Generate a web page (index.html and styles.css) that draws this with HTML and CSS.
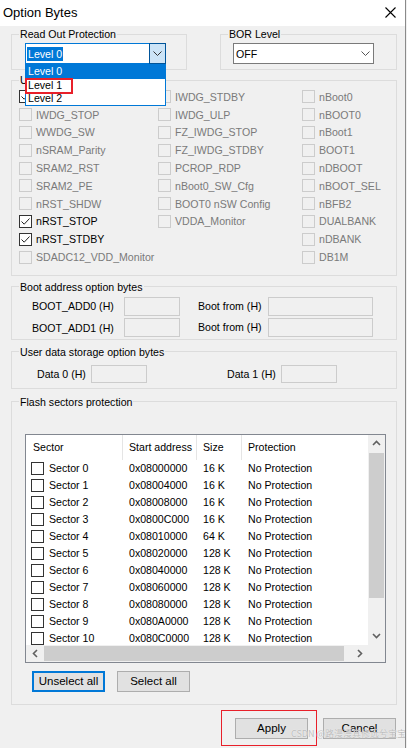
FILE: index.html
```html
<!DOCTYPE html>
<html lang="en">
<head>
    <meta charset="utf-8">
    <title>Option Bytes</title>
    <link rel="stylesheet" href="styles.css">
</head>
<body>
<div class="window">
    <div class="titlebar">
        <span class="title">Option Bytes</span>
        <svg class="close" width="11" height="11" viewBox="0 0 11 11"><path d="M0.5 0.5 L10.5 10.5 M10.5 0.5 L0.5 10.5" stroke="#000" stroke-width="1.1" fill="none"/></svg>
    </div>

    <div class="content">
        <div class="top-row">
            <fieldset class="group rop">
                <legend>Read Out Protection</legend>
                <div class="group-body">
                    <div class="combo focused">
                        <span class="combo-text"><span class="sel">Level 0</span></span>
                        <span class="combo-btn active">
                            <svg width="9" height="5" viewBox="0 0 9 5"><path d="M0.5 0.5 L4.5 4.5 L8.5 0.5" stroke="#333" fill="none"/></svg>
                        </span>
                    </div>
                </div>
            </fieldset>
            <fieldset class="group bor">
                <legend>BOR Level</legend>
                <div class="group-body">
                    <div class="combo">
                        <span class="combo-text">OFF</span>
                        <span class="combo-btn">
                            <svg width="9" height="5" viewBox="0 0 9 5"><path d="M0.5 0.5 L4.5 4.5 L8.5 0.5" stroke="#555" fill="none"/></svg>
                        </span>
                    </div>
                </div>
            </fieldset>
        </div>

        <fieldset class="group user-config">
            <legend>User Configuration</legend>
            <div class="cb-grid">
                <label class="cb-item"><span class="cb on"><svg width="11" height="11" viewBox="0 0 11 11"><path d="M1.5 5.5 L4.2 8.2 L9.5 2.5" stroke="#222" fill="none"/></svg></span>IWDG_SW</label>
                <label class="cb-item off"><span class="cb"></span>IWDG_STDBY</label>
                <label class="cb-item off"><span class="cb"></span>nBoot0</label>

                <label class="cb-item off"><span class="cb"></span>IWDG_STOP</label>
                <label class="cb-item off"><span class="cb"></span>IWDG_ULP</label>
                <label class="cb-item off"><span class="cb"></span>nBOOT0</label>

                <label class="cb-item off"><span class="cb"></span>WWDG_SW</label>
                <label class="cb-item off"><span class="cb"></span>FZ_IWDG_STOP</label>
                <label class="cb-item off"><span class="cb"></span>nBoot1</label>

                <label class="cb-item off"><span class="cb"></span>nSRAM_Parity</label>
                <label class="cb-item off"><span class="cb"></span>FZ_IWDG_STDBY</label>
                <label class="cb-item off"><span class="cb"></span>BOOT1</label>

                <label class="cb-item off"><span class="cb"></span>SRAM2_RST</label>
                <label class="cb-item off"><span class="cb"></span>PCROP_RDP</label>
                <label class="cb-item off"><span class="cb"></span>nDBOOT</label>

                <label class="cb-item off"><span class="cb"></span>SRAM2_PE</label>
                <label class="cb-item off"><span class="cb"></span>nBoot0_SW_Cfg</label>
                <label class="cb-item off"><span class="cb"></span>nBOOT_SEL</label>

                <label class="cb-item off"><span class="cb"></span>nRST_SHDW</label>
                <label class="cb-item off"><span class="cb"></span>BOOT0 nSW Config</label>
                <label class="cb-item off"><span class="cb"></span>nBFB2</label>

                <label class="cb-item"><span class="cb on"><svg width="11" height="11" viewBox="0 0 11 11"><path d="M1.5 5.5 L4.2 8.2 L9.5 2.5" stroke="#222" fill="none"/></svg></span>nRST_STOP</label>
                <label class="cb-item off"><span class="cb"></span>VDDA_Monitor</label>
                <label class="cb-item off"><span class="cb"></span>DUALBANK</label>

                <label class="cb-item"><span class="cb on"><svg width="11" height="11" viewBox="0 0 11 11"><path d="M1.5 5.5 L4.2 8.2 L9.5 2.5" stroke="#222" fill="none"/></svg></span>nRST_STDBY</label>
                <span></span>
                <label class="cb-item off"><span class="cb"></span>nDBANK</label>

                <label class="cb-item off"><span class="cb"></span>SDADC12_VDD_Monitor</label>
                <span></span>
                <label class="cb-item off"><span class="cb"></span>DB1M</label>
            </div>
        </fieldset>

        <fieldset class="group boot">
            <legend>Boot address option bytes</legend>
            <div class="boot-body">
                <div class="field-row">
                    <span class="boot-label">BOOT_ADD0 (H)</span>
                    <span class="field"></span>
                    <span class="from-label">Boot from (H)</span>
                    <span class="field wide"></span>
                </div>
                <div class="field-row">
                    <span class="boot-label low">BOOT_ADD1 (H)</span>
                    <span class="field"></span>
                    <span class="from-label">Boot from (H)</span>
                    <span class="field wide"></span>
                </div>
            </div>
        </fieldset>

        <fieldset class="group data">
            <legend>User data storage option bytes</legend>
            <div class="data-body">
                <span class="data-label">Data 0 (H)</span>
                <span class="field"></span>
                <span class="data-label second">Data 1 (H)</span>
                <span class="field"></span>
            </div>
        </fieldset>

        <fieldset class="group flash">
            <legend>Flash sectors protection</legend>
            <div class="flash-body">
                <div class="listview">
                    <div class="lv-main">
                        <div class="lv-head">
                            <span>Sector</span>
                            <span>Start address</span>
                            <span>Size</span>
                            <span>Protection</span>
                        </div>
                        <div class="lv-row"><span class="lv-first"><span class="cb on plain"></span>Sector 0</span><span>0x08000000</span><span>16 K</span><span>No Protection</span></div>
                        <div class="lv-row"><span class="lv-first"><span class="cb on plain"></span>Sector 1</span><span>0x08004000</span><span>16 K</span><span>No Protection</span></div>
                        <div class="lv-row"><span class="lv-first"><span class="cb on plain"></span>Sector 2</span><span>0x08008000</span><span>16 K</span><span>No Protection</span></div>
                        <div class="lv-row"><span class="lv-first"><span class="cb on plain"></span>Sector 3</span><span>0x0800C000</span><span>16 K</span><span>No Protection</span></div>
                        <div class="lv-row"><span class="lv-first"><span class="cb on plain"></span>Sector 4</span><span>0x08010000</span><span>64 K</span><span>No Protection</span></div>
                        <div class="lv-row"><span class="lv-first"><span class="cb on plain"></span>Sector 5</span><span>0x08020000</span><span>128 K</span><span>No Protection</span></div>
                        <div class="lv-row"><span class="lv-first"><span class="cb on plain"></span>Sector 6</span><span>0x08040000</span><span>128 K</span><span>No Protection</span></div>
                        <div class="lv-row"><span class="lv-first"><span class="cb on plain"></span>Sector 7</span><span>0x08060000</span><span>128 K</span><span>No Protection</span></div>
                        <div class="lv-row"><span class="lv-first"><span class="cb on plain"></span>Sector 8</span><span>0x08080000</span><span>128 K</span><span>No Protection</span></div>
                        <div class="lv-row"><span class="lv-first"><span class="cb on plain"></span>Sector 9</span><span>0x080A0000</span><span>128 K</span><span>No Protection</span></div>
                        <div class="lv-row"><span class="lv-first"><span class="cb on plain"></span>Sector 10</span><span>0x080C0000</span><span>128 K</span><span>No Protection</span></div>
                    </div>
                    <div class="vscroll">
                        <span class="arrow"><svg width="9" height="6" viewBox="0 0 9 6"><path d="M1 5 L4.5 1.5 L8 5" stroke="#606060" stroke-width="1.6" fill="none"/></svg></span>
                        <span class="vthumb"></span>
                        <span class="vtrack"></span>
                        <span class="arrow"><svg width="9" height="6" viewBox="0 0 9 6"><path d="M1 1 L4.5 4.5 L8 1" stroke="#606060" stroke-width="1.6" fill="none"/></svg></span>
                    </div>
                    <div class="hscroll">
                        <span class="arrow"><svg width="6" height="9" viewBox="0 0 6 9"><path d="M5 1 L1.5 4.5 L5 8" stroke="#606060" stroke-width="1.6" fill="none"/></svg></span>
                        <span class="hthumb"></span>
                        <span class="arrow"><svg width="6" height="9" viewBox="0 0 6 9"><path d="M1 1 L4.5 4.5 L1 8" stroke="#606060" stroke-width="1.6" fill="none"/></svg></span>
                    </div>
                    <div class="corner"></div>
                </div>
                <div class="btn-row">
                    <button class="btn default">Unselect all</button>
                    <button class="btn">Select all</button>
                </div>
            </div>
        </fieldset>

        <div class="dialog-buttons">
            <button class="btn">Apply</button>
            <button class="btn">Cancel</button>
        </div>
    </div>

    <!-- open combo list, drawn over the dialog -->
    <ul class="dropdown">
        <li class="hl">Level 0</li>
        <li>Level 1</li>
        <li>Level 2</li>
    </ul>

    <!-- red annotation boxes from the screenshot -->
    <div class="mark mark-level"></div>
    <div class="mark mark-apply"></div>
    <div class="watermark">CSDN @路漫漫其修远兮宝宝</div>
</div>
</body>
</html>
```

FILE: styles.css
```css
* {
    box-sizing: border-box;
}
body {
    margin: 0;
    font-family: "Liberation Sans", Arial, sans-serif;
    font-size: 10.6px;
    color: #000;
    background: #f0f0f0;
}
.window {
    position: relative;
    width: 406px;
    height: 748px;
    background: #f0f0f0;
    border-right: 1px solid #8a8a8a;
    overflow: hidden;
}
.titlebar {
    height: 26px;
    background: #fff;
    display: flex;
    align-items: center;
    justify-content: space-between;
    padding: 0 9px 1px 3px;
}
.title {
    font-size: 13px;
}
.content {
    padding: 1px 0 0 11px;
    width: 397px;
}

/* group boxes */
.group {
    margin: 0;
    padding: 0;
    border: 1px solid #dcdcdc;
    min-width: 0;
}
.group legend {
    margin-left: 7px;
    padding: 0 1px;
    line-height: 14px;
    height: 14px;
}
.top-row {
    display: flex;
    gap: 33px;
}
.rop {
    width: 176px;
}
.bor {
    width: 177px;
}
.group-body {
    padding: 2px 0 5px 13px;
}
.bor .group-body {
    padding-left: 12px;
}

/* combo boxes */
.combo {
    width: 141px;
    height: 21px;
    background: #fff;
    border: 1px solid #7a7a7a;
    display: flex;
    align-items: center;
    justify-content: space-between;
}
.combo.focused {
    border-color: #0078d7;
}
.combo-text {
    padding-left: 2px;
}
.combo-text .sel {
    background: #0078d7;
    color: #fff;
    padding: 1px 1px;
    margin-left: -1px;
}
.combo-btn {
    width: 17px;
    height: 21px;
    margin-right: -1px;
    display: flex;
    align-items: center;
    justify-content: center;
}
.combo-btn.active {
    background: #cce4f7;
    border: 1px solid #005499;
}

/* user configuration checkboxes */
.user-config {
    margin-top: 3px;
    width: 386px;
}
.cb-grid {
    display: grid;
    grid-template-columns: 139px 144px 1fr;
    grid-auto-rows: 17.8px;
    margin-top: 1px;
    padding: 0 0 9px 7px;
}
.cb-item {
    display: flex;
    align-items: center;
    white-space: nowrap;
}
.cb-item.off {
    color: #7a7a7a;
}
.cb {
    width: 13px;
    height: 13px;
    flex: none;
    margin-right: 4px;
    border: 1px solid #cccccc;
    background: #f0f0f0;
    display: flex;
    align-items: center;
    justify-content: center;
}
.cb.on {
    border-color: #333;
    background: #fff;
}

/* boot address */
.boot {
    margin-top: 4px;
    width: 386px;
}
.boot-body {
    margin-top: 3px;
    padding: 0 0 2px 20px;
    display: flex;
    flex-direction: column;
    gap: 2px;
}
.field-row {
    display: flex;
    align-items: center;
    height: 19px;
}
.boot-label {
    width: 92px;
}
.boot-label.low {
    padding-top: 2px;
}
.from-label {
    width: 70px;
    margin-left: 18px;
}
.field {
    width: 56px;
    height: 19px;
    border: 1px solid #cccccc;
    background: #f0f0f0;
}
.field.wide {
    width: 105px;
}

/* user data */
.data {
    margin-top: 5px;
    width: 386px;
}
.data-body {
    display: flex;
    align-items: center;
    margin-top: 6px;
    padding: 0 0 5px 25px;
}
.data-body .field {
    height: 18px;
}
.data-label {
    width: 54px;
}
.data-label.second {
    margin-left: 80px;
}

/* flash sectors */
.flash {
    margin-top: 6px;
    width: 386px;
}
.flash-body {
    margin-top: 25px;
    padding: 0 0 12px 13px;
}
.listview {
    width: 361px;
    height: 229px;
    border: 1px solid #828790;
    background: #fff;
    display: grid;
    grid-template-columns: 1fr 17px;
    grid-template-rows: 1fr 17px;
}
.lv-main {
    overflow: hidden;
}
.lv-head,
.lv-row {
    display: grid;
    grid-template-columns: 96px 74px 45px 1fr;
    white-space: nowrap;
}
.lv-head {
    height: 25px;
}
.lv-head span {
    display: flex;
    align-items: center;
    padding-left: 6px;
    border-left: 1px solid #e5e5e5;
}
.lv-head span:first-child {
    padding-left: 7px;
    border-left: none;
}
.lv-row {
    height: 17px;
    align-items: center;
}
.lv-row span {
    padding-left: 7px;
}
.lv-row .lv-first {
    display: flex;
    align-items: center;
    padding-left: 5px;
}
.lv-row .cb {
    margin-right: 5px;
    padding: 0;
}
.vscroll {
    background: #f0f0f0;
    display: flex;
    flex-direction: column;
}
.vscroll .arrow {
    height: 17px;
    flex: none;
    display: flex;
    align-items: center;
    justify-content: center;
}
.vthumb {
    height: 145px;
    margin: 1px 1px 0;
    background: #cdcdcd;
}
.vtrack {
    flex: 1;
}
.hscroll {
    background: #f0f0f0;
    display: flex;
    align-items: stretch;
}
.hscroll .arrow {
    width: 17px;
    flex: none;
    display: flex;
    align-items: center;
    justify-content: center;
}
.hthumb {
    width: 300px;
    margin: 1px 0 1px 1px;
    background: #cdcdcd;
}
.hscroll .arrow:last-child {
    margin-left: auto;
}
.corner {
    background: #f0f0f0;
}

/* buttons */
.btn {
    width: 73px;
    height: 21px;
    padding: 0;
    border: 1px solid #adadad;
    background: #e1e1e1;
    font-family: "Liberation Sans", Arial, sans-serif;
    font-size: 11.5px;
    color: #000;
}
.btn.default {
    border: 2px solid #0078d7;
}
.btn-row {
    display: flex;
    gap: 12px;
    margin: 8px 0 0 7px;
}
.dialog-buttons {
    display: flex;
    justify-content: flex-end;
    gap: 15px;
    margin: 13px 1px 0 0;
}

/* open drop-down list */
.dropdown {
    position: absolute;
    left: 25px;
    top: 64px;
    width: 141px;
    height: 42px;
    margin: 0;
    padding: 0;
    list-style: none;
    background: #fff;
    border: 1px solid #0078d7;
    z-index: 5;
}
.dropdown li {
    height: 13.5px;
    line-height: 13.5px;
    padding-left: 2px;
}
.dropdown li.hl {
    background: #0078d7;
    color: #fff;
}

/* annotations */
.mark {
    position: absolute;
    border: 1px solid #e8202a;
    z-index: 6;
}
.mark-level {
    left: 25px;
    top: 78px;
    width: 48px;
    height: 16px;
    border-width: 2px;
}
.mark-apply {
    left: 221px;
    top: 710px;
    width: 96px;
    height: 36px;
}
.watermark {
    position: absolute;
    left: 291px;
    top: 727px;
    font-family: "Noto Sans CJK SC", sans-serif;
    font-size: 9px;
    color: #bdbdbd;
    text-shadow: 0 0 1px #fff;
    white-space: nowrap;
    z-index: 7;
}
```
